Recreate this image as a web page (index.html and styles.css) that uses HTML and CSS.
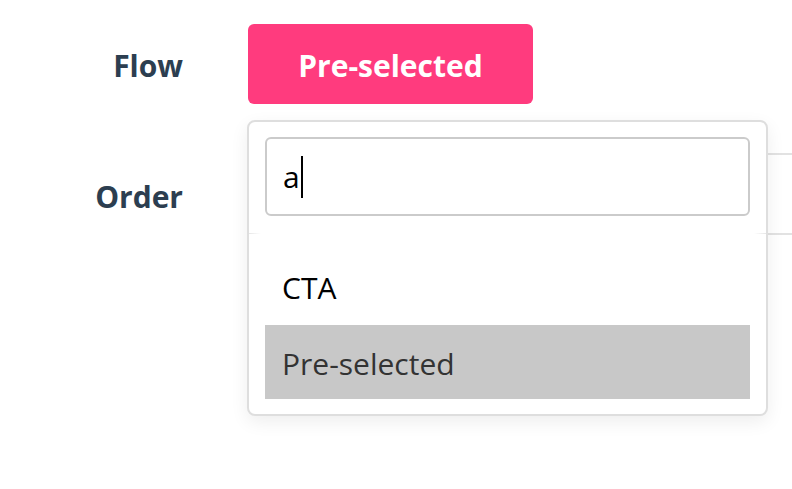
FILE: index.html
```html
<!DOCTYPE html>
<html lang="en">
<head>
<meta charset="utf-8">
<title>Field select</title>
<link rel="stylesheet" href="styles.css">
</head>
<body>
<div class="form">
  <div class="row row-flow">
    <div class="label">Flow</div>
    <div class="value">
      <div class="select">
        <button class="chip" type="button">Pre-selected</button>
        <div class="dropdown">
          <div class="search"><span class="typed">a</span><span class="caret"></span></div>
          <div class="separator"></div>
          <ul class="options">
            <li class="option">CTA</li>
            <li class="option is-active">Pre-selected</li>
          </ul>
        </div>
      </div>
    </div>
  </div>
  <div class="row row-order">
    <div class="label">Order</div>
    <div class="value"></div>
  </div>
</div>
</body>
</html>
```
FILE: styles.css
```css
html, body {
  margin: 0;
  padding: 0;
  background: #ffffff;
}

body {
  font-family: "Open Sans", "Noto Sans", sans-serif;
  width: 792px;
  height: 489px;
  overflow: hidden;
}

.form {
  display: grid;
  grid-template-columns: 248px 1fr;
}

.row {
  display: contents;
}

.label {
  box-sizing: border-box;
  padding-right: 65px;
  text-align: right;
  font-weight: 700;
  font-size: 30px;
  color: #2c3e50;
}

.row-flow .label {
  padding-top: 26px;
  line-height: 80px;
}

.row-order .label {
  display: flex;
  align-items: center;
  justify-content: flex-end;
  padding-top: 4px;
  line-height: 40px;
}

.value {
  border-bottom: 2px solid #e2e2e2;
}

.row-flow .value {
  padding-top: 24px;
  box-sizing: border-box;
  height: 155px;
}

.row-order .value {
  height: 80px;
  box-sizing: border-box;
}

.select {
  position: relative;
  display: inline-block;
  vertical-align: top;
}

.chip {
  display: block;
  width: 285px;
  height: 80px;
  margin: 0;
  border: none;
  border-radius: 6px;
  background: #ff3b7e;
  color: #ffffff;
  font-family: inherit;
  font-weight: 700;
  font-size: 30px;
  line-height: 76px;
  padding: 4px 0 0;
  box-sizing: border-box;
}

.dropdown {
  position: absolute;
  left: -1px;
  top: calc(100% + 16px);
  width: 521px;
  box-sizing: border-box;
  border: 2px solid #dedede;
  border-radius: 8px;
  background: #ffffff;
  padding: 15px 16px 15px;
  box-shadow: 0 6px 18px rgba(0, 0, 0, 0.07);
  z-index: 2;
}

.search {
  height: 79px;
  box-sizing: border-box;
  border: 2px solid #cbcbcb;
  border-radius: 6px;
  padding-left: 16px;
  display: flex;
  align-items: center;
  font-size: 30px;
  color: #000000;
}

.typed {
  line-height: 40px;
}

.caret {
  width: 2px;
  height: 42px;
  background: #000000;
  margin-left: 1px;
}

.separator {
  height: 1px;
  margin: 17px -16px 0;
  background: linear-gradient(to right, #e6e6e6, rgba(230, 230, 230, 0) 12px, rgba(230, 230, 230, 0) calc(100% - 12px), #e6e6e6);
}

.options {
  list-style: none;
  margin: 0;
  padding: 16px 0 0;
}

.option {
  height: 75px;
  padding-left: 17px;
  display: flex;
  align-items: center;
  font-size: 30px;
  color: #000000;
}

.option.is-active {
  height: 74px;
  padding-top: 2px;
  box-sizing: border-box;
  background: #c8c8c8;
  color: #333333;
}
```
